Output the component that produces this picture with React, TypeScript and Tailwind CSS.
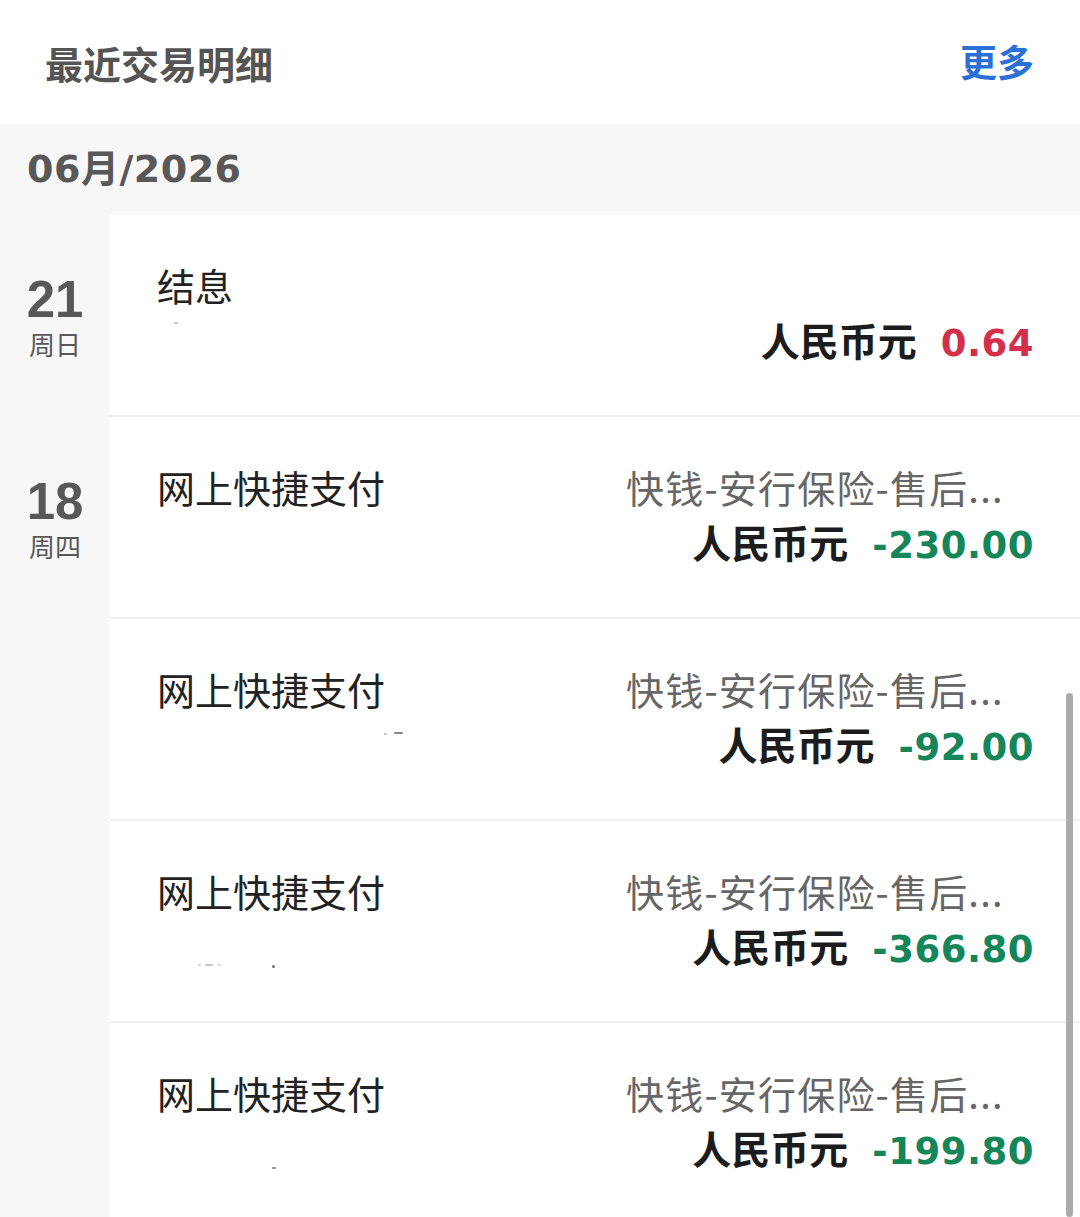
import React from 'react';

type Mark = { x: number; y: number; w: number; h: number; c: string };

type Tx = {
  title: string;
  desc?: string;
  amount: string;
  income?: boolean;
  marks?: Mark[];
};

type DayGroup = {
  day: string;
  week: string;
  items: Tx[];
};

const DESC = '快钱-安行保险-售后...';

const groups: DayGroup[] = [
  {
    day: '21',
    week: '周日',
    items: [
      {
        title: '结息',
        amount: '0.64',
        income: true,
        marks: [{ x: 64, y: 107, w: 4, h: 2, c: '#c4c4c4' }],
      },
    ],
  },
  {
    day: '18',
    week: '周四',
    items: [
      { title: '网上快捷支付', desc: DESC, amount: '-230.00' },
      {
        title: '网上快捷支付',
        desc: DESC,
        amount: '-92.00',
        marks: [
          { x: 274, y: 114, w: 3, h: 2, c: '#bdbdbd' },
          { x: 284, y: 113, w: 9, h: 2, c: '#8a8a8a' },
        ],
      },
      {
        title: '网上快捷支付',
        desc: DESC,
        amount: '-366.80',
        marks: [
          { x: 88, y: 143, w: 3, h: 2, c: '#cfcfcf' },
          { x: 95, y: 143, w: 8, h: 2, c: '#c8c8c8' },
          { x: 108, y: 143, w: 3, h: 2, c: '#d6d6d6' },
          { x: 162, y: 144, w: 3, h: 3, c: '#6f6f6f' },
        ],
      },
      {
        title: '网上快捷支付',
        desc: DESC,
        amount: '-199.80',
        marks: [{ x: 162, y: 144, w: 4, h: 2, c: '#8f8f8f' }],
      },
    ],
  },
];

function TxRow({ tx }: { tx: Tx }) {
  return (
    <div className="relative flex h-[202px] justify-between border-b-2 border-[#f0f0f0] bg-white pl-[47px] pr-[46px] pt-[42px]">
      <div className="text-[38px] leading-[55px] text-[#222222]">{tx.title}</div>

      <div className="flex w-[408px] flex-col">
        <div className="h-[55px] text-[38px] leading-[55px] tracking-[1.2px] text-[#666666]">{tx.desc ?? ''}</div>
        <div className="flex items-baseline justify-end leading-[55px]">
          <span className="text-[39px] font-bold text-[#1c1c1c]">人民币元</span>
          <span
            className={
              tx.income
                ? "ml-[24px] font-['DejaVu_Sans',sans-serif] text-[37px] font-bold tracking-[0.5px] text-[#d32f4a]"
                : "ml-[24px] font-['DejaVu_Sans',sans-serif] text-[37px] font-bold tracking-[0.5px] text-[#15855a]"
            }
          >
            {tx.amount}
          </span>
        </div>
      </div>

      {tx.marks?.map((m, i) => (
        <span
          key={i}
          className="absolute rounded-full"
          style={{ left: m.x, top: m.y, width: m.w, height: m.h, backgroundColor: m.c }}
        />
      ))}
    </div>
  );
}

export default function App() {
  return (
    <div className="relative h-[1217px] w-[1080px] overflow-hidden bg-[#f7f7f7] font-['Noto_Sans_CJK_SC',sans-serif]">
      <header className="flex h-[124px] items-center justify-between bg-white pl-[45px] pr-[46px]">
        <h1 className="text-[38px] font-bold text-[#555555]">最近交易明细</h1>
        <span className="text-[37px] font-bold text-[#2c6fd6]">更多</span>
      </header>

      <div className="flex h-[91px] items-center pl-[27px]">
        <span className="font-['DejaVu_Sans','Noto_Sans_CJK_SC',sans-serif] text-[38px] font-bold tracking-[0.5px] text-[#585858]">
          06月/2026
        </span>
      </div>

      {groups.map((g) => (
        <div key={g.day} className="flex">
          <div className="flex w-[110px] shrink-0 flex-col items-center pt-[64px]">
            <span className="font-['Liberation_Sans',sans-serif] text-[51px] font-bold leading-[42px] text-[#585858]">
              {g.day}
            </span>
            <span className="mt-[10px] text-[26px] leading-[26px] text-[#585858]">{g.week}</span>
          </div>
          <div className="flex-1">
            {g.items.map((tx, i) => (
              <TxRow key={i} tx={tx} />
            ))}
          </div>
        </div>
      ))}

      <div className="absolute bottom-0 right-[7px] top-[693px] w-[7px] rounded-full bg-[#ababab]" />
    </div>
  );
}
